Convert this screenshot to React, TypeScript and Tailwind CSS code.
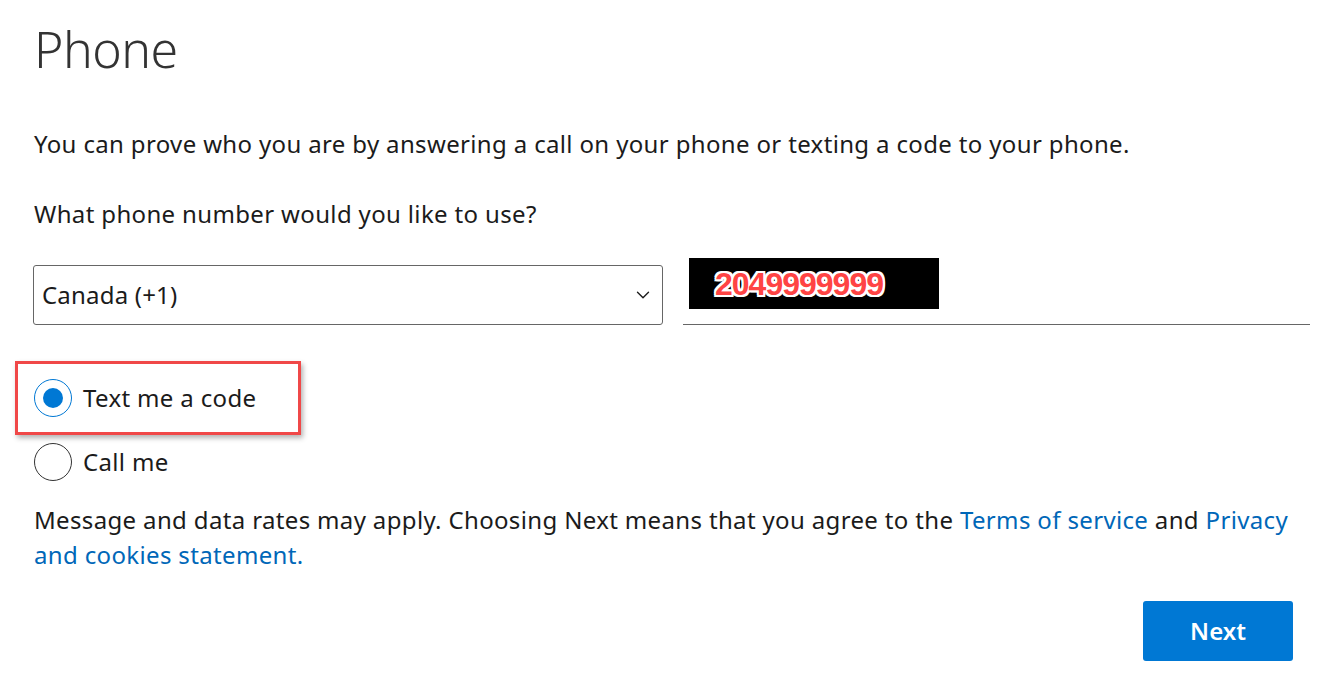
import { ChevronDown } from 'lucide-react';

export default function App() {
  return (
    <div className="w-[1317px] h-[694px] bg-white text-[#1b1b1b] overflow-hidden" style={{ fontFamily: '"Noto Sans", "Open Sans", sans-serif' }}>
      <div className="pl-[34px] pr-[7px]">
        <h1 className="text-[50px] font-light leading-none pt-[24px] text-[#333] tracking-[-0.5px]">Phone</h1>

        <p className="text-[24px] tracking-[0.35px] mt-[53px] leading-[34px]">
          You can prove who you are by answering a call on your phone or texting a code to your phone.
        </p>

        <p className="text-[24px] tracking-[0.35px] mt-[36px] leading-[34px]">What phone number would you like to use?</p>

        <div className="flex gap-[20px] mt-[27px] items-end">
          <div className="w-[630px] h-[60px] -ml-px border border-[#666] rounded-[3px] flex items-center justify-between pl-[8px] pr-[8px]">
            <span className="text-[24px] tracking-[0.2px]">Canada (+1)</span>
            <ChevronDown size={22} strokeWidth={1.5} className="text-[#1b1b1b]" />
          </div>
          <div className="flex-1 h-[67px] border-b border-[#666] pl-[6px]">
            <div className="w-[250px] h-[51px] bg-black flex items-center pl-[26px]">
              <span
                className="text-[32px] font-bold text-[#ff4444] tracking-[-1px]"
                style={{ fontFamily: '"Liberation Sans", Arial, sans-serif', textShadow: '2px 0 #fff, -2px 0 #fff, 0 2px #fff, 0 -2px #fff, 2px 2px #fff, -2px -2px #fff, 2px -2px #fff, -2px 2px #fff' }}
              >
                2049999999
              </span>
            </div>
          </div>
        </div>

        <div className="mt-[36px] -ml-[19px] w-[286px] h-[74px] border-[3px] border-[#f04848] shadow-[2px_3px_5px_rgba(0,0,0,0.3)] flex items-center pl-[16px] gap-[11px]">
          <span className="w-[38px] h-[38px] rounded-full border border-[#0078d4] flex items-center justify-center">
            <span className="w-[20px] h-[20px] rounded-full bg-[#0078d4]" />
          </span>
          <span className="text-[24px] tracking-[0.35px]">Text me a code</span>
        </div>

        <div className="flex items-center gap-[11px] mt-[8px]">
          <span className="w-[38px] h-[38px] rounded-full border border-[#333]" />
          <span className="text-[24px] tracking-[0.35px]">Call me</span>
        </div>

        <p className="text-[24px] tracking-[0.35px] leading-[35px] mt-[21px] pr-[20px]">
          Message and data rates may apply. Choosing Next means that you agree to the{' '}
          <a className="text-[#0067b8]">Terms of service</a> and{' '}
          <a className="text-[#0067b8]">Privacy and cookies statement.</a>
        </p>

        <div className="flex justify-end pr-[17px] mt-[29px]">
          <button className="w-[150px] h-[60px] bg-[#0078d4] text-white text-[24px] font-semibold rounded-[3px]">
            Next
          </button>
        </div>
      </div>
    </div>
  );
}
